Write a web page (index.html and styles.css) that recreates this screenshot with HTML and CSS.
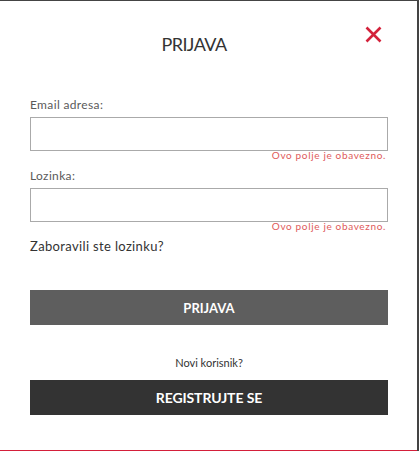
FILE: index.html
```html
<!DOCTYPE html>
<html lang="sr">
<head>
<meta charset="utf-8">
<title>Prijava</title>
<link rel="stylesheet" href="styles.css">
</head>
<body>
<div class="modal">
  <div class="modal-header">
    <h1 class="modal-title">PRIJAVA</h1>
    <button class="close-btn" type="button" aria-label="Zatvori">
      <svg width="17" height="17" viewBox="0 0 17 17"><path d="M1.5 1.5 L15.5 15.5 M15.5 1.5 L1.5 15.5" stroke="#d3223b" stroke-width="2.6" fill="none"/></svg>
    </button>
  </div>
  <form class="login-form">
    <div class="field">
      <label class="field-label">Email adresa:</label>
      <input class="field-input" type="text">
      <div class="field-error">Ovo polje je obavezno.</div>
    </div>
    <div class="field field-second">
      <label class="field-label">Lozinka:</label>
      <input class="field-input" type="password">
      <div class="field-error">Ovo polje je obavezno.</div>
    </div>
    <a class="forgot-link">Zaboravili ste lozinku?</a>
    <button class="btn btn-login" type="button">PRIJAVA</button>
    <div class="new-user">Novi korisnik?</div>
    <button class="btn btn-register" type="button">REGISTRUJTE SE</button>
  </form>
</div>
</body>
</html>
```

FILE: styles.css
```css
html, body {
  margin: 0;
  padding: 0;
  height: 100%;
  overflow: hidden;
}
body {
  background: #444;
  font-family: "Lato", "Open Sans", sans-serif;
}
.modal {
  margin-top: 1px;
  width: 417px;
  height: 450px;
  box-sizing: border-box;
  background: #fff;
  border-bottom: 1px solid #d41f3a;
  padding: 25px 29px 0 30px;
}
.modal-header {
  display: flex;
  align-items: flex-start;
}
.modal-title {
  flex: 1;
  margin: 7px 0 0 0;
  text-align: center;
  font-size: 18px;
  line-height: 22px;
  font-weight: 400;
  color: #333;
  letter-spacing: -0.6px;
}
.close-btn {
  width: 30px;
  height: 17px;
  padding: 0;
  border: 0;
  background: none;
  display: flex;
  justify-content: center;
}
.login-form {
  margin-top: 42px;
  display: flex;
  flex-direction: column;
}
.field {
  display: flex;
  flex-direction: column;
}
.field-second {
  margin-top: 8px;
}
.field-label {
  font-size: 12px;
  line-height: 15px;
  color: #5a5a5a;
  margin-bottom: 5px;
  letter-spacing: 0.35px;
}
.field-input {
  height: 34px;
  box-sizing: border-box;
  border: 1px solid #aaa;
  margin: 0;
  padding: 0 8px;
  outline: none;
}
.field-error {
  margin-top: -1px;
  font-size: 10px;
  line-height: 10px;
  color: #e05a5a;
  text-align: right;
  padding-right: 2px;
  letter-spacing: 0.65px;
}
.forgot-link {
  margin-top: 7px;
  font-size: 13px;
  line-height: 16px;
  color: #333;
  letter-spacing: 0.35px;
}
.btn {
  height: 35px;
  border: 0;
  margin: 0;
  padding: 0;
  color: #fff;
  font-family: "Lato", "Open Sans", sans-serif;
  font-weight: 700;
}
.btn-login {
  margin-top: 36px;
  background: #5e5e5e;
  font-size: 13px;
}
.new-user {
  margin-top: 31px;
  text-align: center;
  font-size: 11px;
  line-height: 14px;
  color: #333;
}
.btn-register {
  margin-top: 10px;
  background: #333;
  font-size: 14px;
  letter-spacing: -0.1px;
}
```
